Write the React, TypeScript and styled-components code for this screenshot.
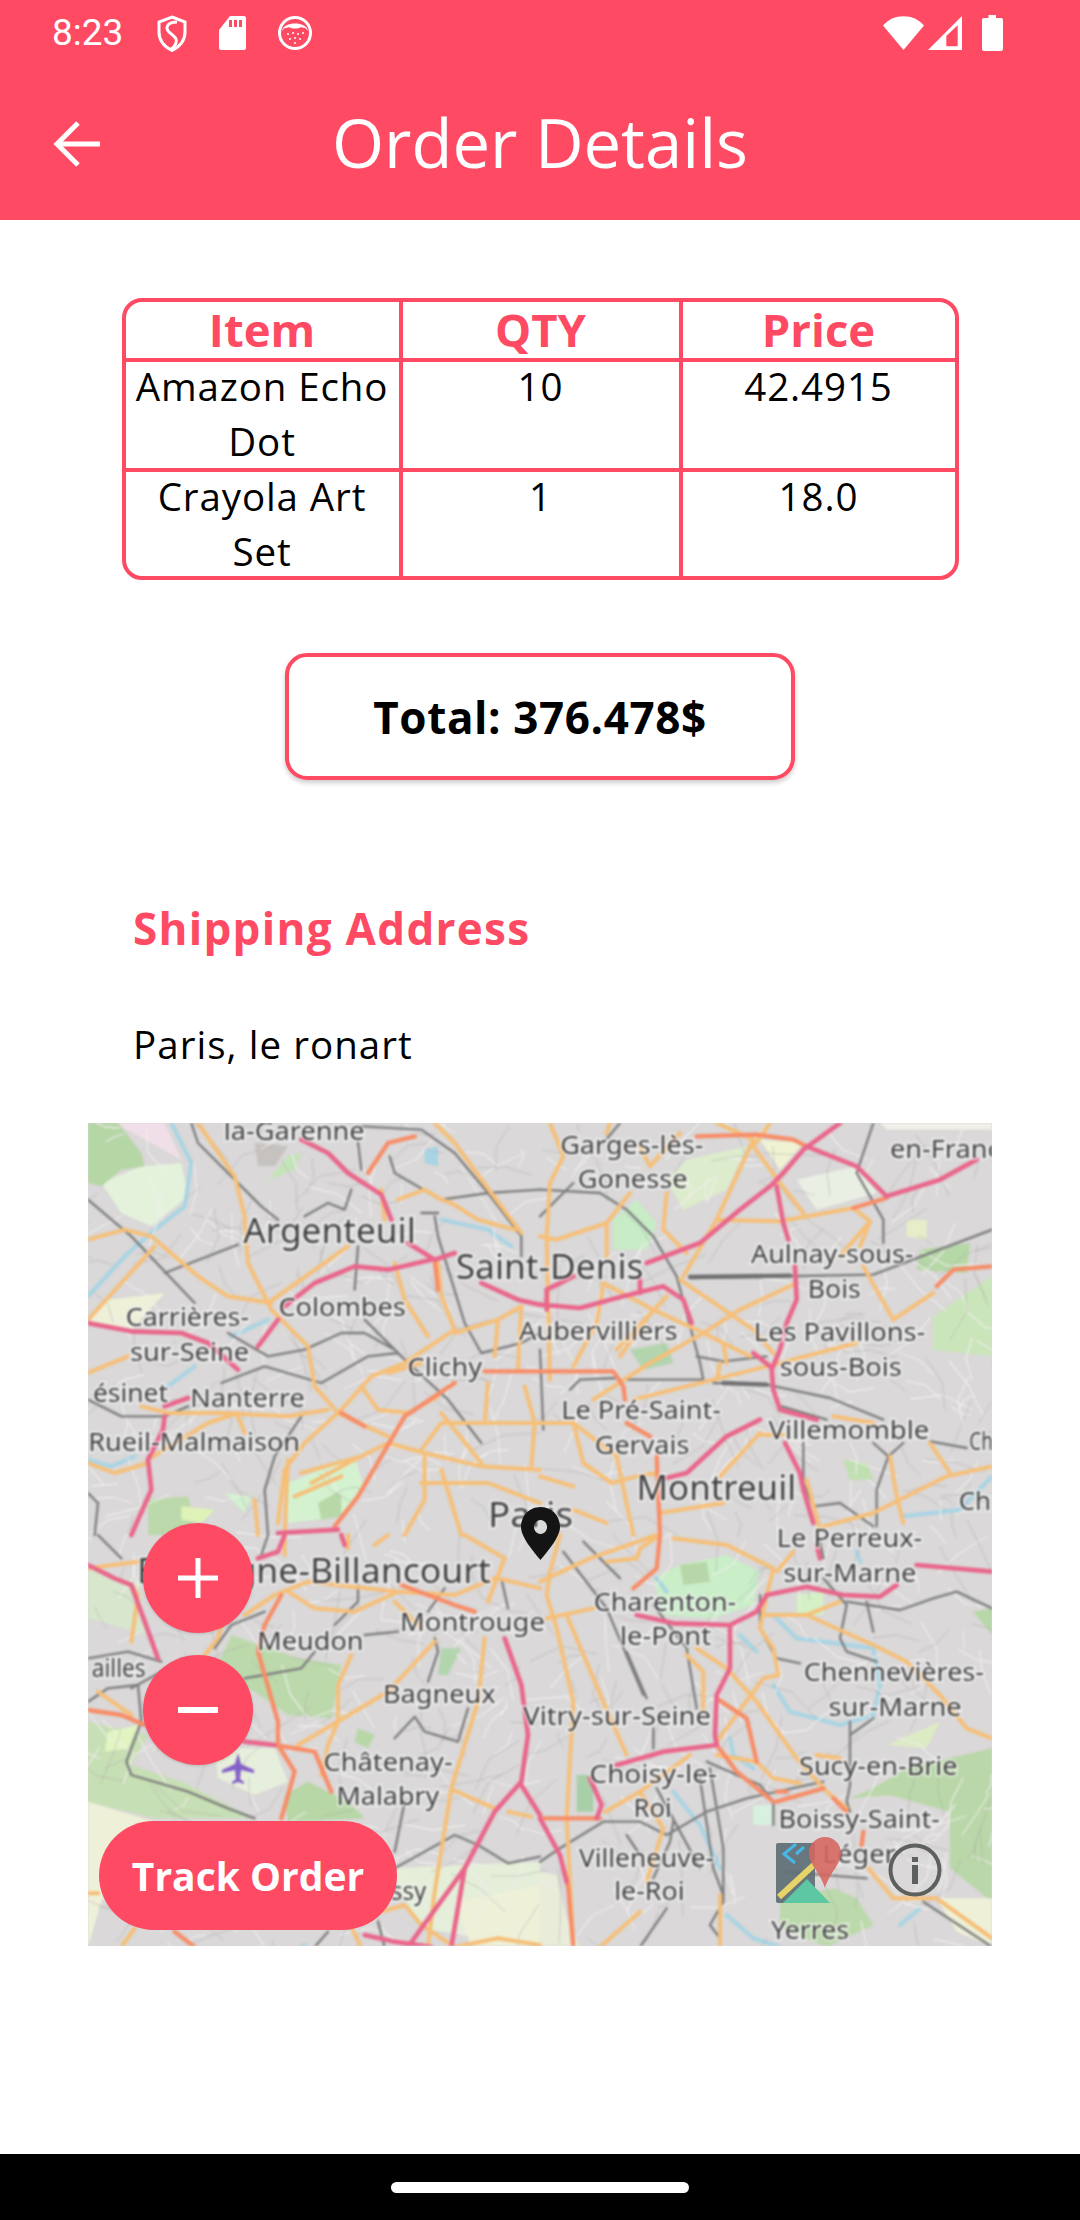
import React from 'react';
import styled, { createGlobalStyle } from 'styled-components';

const RED = '#fe4a63';

const Global = createGlobalStyle`
  html, body { margin: 0; padding: 0; background: #fff; }
  body { font-family: "Open Sans", "Noto Sans", sans-serif; }
  * { box-sizing: border-box; }
`;

const Page = styled.div`
  width: 1080px;
  height: 2220px;
  display: flex;
  flex-direction: column;
  background: #fff;
  overflow: hidden;
`;
const Header = styled.header`
  height: 220px;
  background: ${RED};
  color: #fff;
  display: flex;
  flex-direction: column;
  flex: none;
`;
const StatusBar = styled.div`
  height: 66px;
  display: flex;
  align-items: center;
  padding: 0 77px 0 52px;
`;
const Clock = styled.span`
  font-family: Roboto, sans-serif;
  font-size: 37px;
  width: 105px;
  line-height: 66px;
`;
const StatusIcons = styled.div`
  display: flex;
  align-items: center;
  gap: 32px;
`;
const Spacer = styled.div`
  flex: 1;
`;
const RightIcons = styled.div`
  display: flex;
  align-items: center;
  gap: 4px;
`;
const BatteryIcon = styled.svg`
  margin-left: 16px;
`;
const AppBar = styled.div`
  flex: 1;
  position: relative;
  display: flex;
  align-items: center;
  justify-content: center;
`;
const BackButton = styled.div`
  position: absolute;
  left: 53px;
  top: 54px;
  width: 48px;
  height: 48px;
`;
const Title = styled.h1`
  margin: 0;
  font-size: 67px;
  font-weight: 400;
  line-height: 86px;
  position: relative;
  top: -1px;
`;
const Content = styled.main`
  flex: 1;
  display: flex;
  flex-direction: column;
  align-items: center;
  padding-top: 78px;
`;
const OrderTable = styled.div`
  width: 837px;
  border: 4px solid ${RED};
  border-radius: 20px;
  display: grid;
  grid-template-columns: 277px 280px 272px;
  overflow: hidden;
`;
const HeadCell = styled.div<{ $last?: boolean }>`
  height: 60px;
  line-height: 55px;
  font-size: 45.5px;
  font-weight: 700;
  color: ${RED};
  text-align: center;
  border-right: ${(p) => (p.$last ? 'none' : `4px solid ${RED}`)};
  border-bottom: 4px solid ${RED};
`;
const Cell = styled.div<{ $last?: boolean; $bottom?: boolean }>`
  height: ${(p) => (p.$bottom ? '104px' : '110px')};
  font-size: 38.5px;
  letter-spacing: 0.9px;
  line-height: 55px;
  color: #000;
  text-align: center;
  border-right: ${(p) => (p.$last ? 'none' : `4px solid ${RED}`)};
  border-bottom: ${(p) => (p.$bottom ? 'none' : `4px solid ${RED}`)};
`;
const CellText = styled.div`
  margin-top: -3px;
`;
const TotalBox = styled.div`
  margin-top: 73px;
  width: 510px;
  height: 127px;
  border: 4px solid ${RED};
  border-radius: 22px;
  box-shadow: 0 3px 5px rgba(0, 0, 0, 0.2);
  display: flex;
  align-items: center;
  justify-content: center;
  font-size: 44px;
  letter-spacing: 0.6px;
  font-weight: 700;
  color: #000;
`;
const AddressBlock = styled.section`
  align-self: stretch;
  padding: 0 0 0 133px;
`;
const AddressTitle = styled.h2`
  margin: 118px 0 0;
  font-size: 44px;
  letter-spacing: 1.3px;
  line-height: 60px;
  font-weight: 700;
  color: ${RED};
`;
const AddressText = styled.p`
  margin: 56px 0 0;
  font-size: 38.5px;
  letter-spacing: 1.05px;
  line-height: 60px;
  color: #000;
`;
const MapBox = styled.div`
  position: relative;
  margin-top: 49px;
  width: 904px;
  height: 823px;
  overflow: hidden;
  background: #dad8d8;
`;
const MapArt = styled.svg`
  display: block;
  width: 100%;
  height: 100%;
  filter: blur(0.8px);
`;
const Fab = styled.div<{ $top: number }>`
  position: absolute;
  left: 55px;
  top: ${(p) => p.$top}px;
  width: 110px;
  height: 110px;
  border-radius: 50%;
  background: ${RED};
  display: flex;
  align-items: center;
  justify-content: center;
  box-shadow: 0 1px 3px rgba(0, 0, 0, 0.15);
`;
const TrackButton = styled.div`
  position: absolute;
  left: 11px;
  top: 698px;
  width: 298px;
  height: 109px;
  border-radius: 55px;
  background: ${RED};
  color: #fff;
  display: flex;
  align-items: center;
  justify-content: center;
  font-size: 39px;
  font-weight: 700;
`;
const Pin = styled.svg`
  position: absolute;
  left: 433px;
  top: 384px;
`;
const MapLogo = styled.svg`
  position: absolute;
  left: 688px;
  top: 714px;
`;
const InfoMark = styled.svg`
  position: absolute;
  left: 800px;
  top: 720px;
`;
const NavBar = styled.footer`
  height: 66px;
  background: #000;
  display: flex;
  align-items: center;
  justify-content: center;
  flex: none;
`;
const HomePill = styled.div`
  width: 298px;
  height: 11px;
  border-radius: 6px;
  background: #fff;
`;

type L = [string, number, number, number, number?];
const labels: L[] = [
  ['la-Garenne', 245, 485, 55],
  ['Garges-lès-', 818, 1062, 80],
  ['Gonesse', 848, 1035, 142],
  ['en-Franc', 1380, 1568, 88],
  ['Argenteuil', 278, 572, 237, 1],
  ['Saint-Denis', 640, 960, 303, 1],
  ['Aulnay-sous-', 1143, 1420, 280],
  ['Bois', 1240, 1330, 343],
  ['Colombes', 338, 555, 376],
  ['Carrières-', 78, 288, 395],
  ['sur-Seine', 85, 288, 458],
  ['Aubervilliers', 748, 1018, 420],
  ['Les Pavillons-', 1148, 1440, 422],
  ['sous-Bois', 1192, 1400, 486],
  ['Clichy', 558, 685, 487],
  ['Le Pré-Saint-', 820, 1092, 564],
  ['Gervais', 877, 1038, 628],
  ['Villemomble', 1173, 1447, 602],
  ['ésinet', 22, 150, 533],
  ['Nanterre', 188, 383, 543],
  ['Rueil-Malmaison', 14, 375, 623],
  ['Ch', 1515, 1555, 622],
  ['Ch', 1497, 1552, 732],
  ['Montreuil', 948, 1220, 708, 1],
  ['Paris', 695, 840, 757, 1],
  ['Le Perreux-', 1187, 1435, 798],
  ['sur-Marne', 1198, 1425, 862],
  ['Boulogne-Billancourt', 97, 700, 860, 1],
  ['Charenton-', 875, 1118, 915],
  ['le-Pont', 920, 1075, 978],
  ['Montrouge', 545, 792, 952],
  ['Meudon', 302, 483, 987],
  ['ailles', 20, 112, 1036],
  ['Chennevières-', 1233, 1540, 1044],
  ['sur-Marne', 1275, 1502, 1107],
  ['Bagneux', 516, 708, 1084],
  ['Vitry-sur-Seine', 755, 1075, 1125],
  ['Châtenay-', 415, 635, 1208],
  ['Malabry', 437, 612, 1271],
  ['Sucy-en-Brie', 1225, 1495, 1216],
  ['Choisy-le-', 868, 1085, 1230],
  ['Roi', 943, 1008, 1293],
  ['Boissy-Saint-', 1190, 1465, 1313],
  ['Léger', 1265, 1390, 1377],
  ['Villeneuve-', 850, 1080, 1383],
  ['le-Roi', 910, 1030, 1445],
  ['Yerres', 1177, 1310, 1515],
  ['Massy', 470, 590, 1445],
];

type Fill = [string, string];
type Quad = {
  x: number;
  y: number;
  fills: Fill[];
  water: string;
  grey: string;
  orange: string;
  salmon: string;
  pink: string;
  heavy?: string;
};

const quads: Quad[] = [
  {
    x: 0,
    y: 0,
    fills: [
      ['M80 0 L230 0 L280 110 L190 60 Z', '#f0dfe8'],
      ['M40 180 L160 130 L280 120 L300 220 L190 310 L100 270 Z', '#e4f2dc'],
      ['M0 0 L90 0 L160 90 L170 130 L100 140 L40 190 L0 180 Z', '#b5d6a5'],
      ['M60 530 L230 510 L130 620 L0 600 Z', '#eef0d8'],
      ['M500 60 L600 70 L560 130 L510 130 Z', '#c6c2bf'],
      ['M600 100 L640 90 L620 140 L540 170 Z', '#c3e4b8'],
      ['M600 1080 L800 1000 L830 1100 L760 1180 L600 1200 Z', '#d4f2d0'],
      ['M690 1140 L760 1100 L760 1180 L700 1190 Z', '#b8d8a8'],
      ['M180 1130 L300 1120 L330 1236 L180 1236 Z', '#bcd9ab'],
      ['M280 1150 L380 1160 L340 1200 L280 1190 Z', '#dff2b8'],
      ['M1010 80 L1050 70 L1050 130 L1010 120 Z', '#a8d4e4'],
      ['M410 1110 L490 1120 L470 1170 Z', '#d2f0d0'],
    ],
    water:
      'M250 0 L310 120 L290 250 L200 320 L110 400 L0 520 M1060 290 L1200 320 L1270 370 M540 590 L430 640 M320 730 L240 790 M0 1010 L70 1030 L140 1000',
    grey:
      'M0 230 L130 340 L320 540 M230 450 L450 365 M310 0 L330 60 L520 250 L570 290 M650 280 L720 240 L770 260 L790 200 M820 10 L1000 20 L1100 90 L1200 210 L1300 340 L1300 400 M905 100 L920 150 L1040 220 L1060 230 L1200 210 L1356 200 M1040 280 L1050 340 L1130 600 L1180 690 L1300 660 L1356 630 M420 630 L540 700 L650 680 L760 630 L830 630 L920 680 M400 780 L530 730 L700 780 L840 700 L930 690 M830 590 L950 710 L1080 830 L1180 960 M810 370 L800 500 M0 830 L100 880 L230 880 L300 850 M640 880 L560 1000 L530 1100 L540 1236 M1000 270 L1050 270 M810 60 L820 140 M0 1110 L30 1140 L20 1236',
    orange:
      'M330 0 L440 160 L470 280 L480 420 L550 560 L660 670 L680 790 L750 870 L900 940 M0 350 L110 320 L190 340 L330 460 L420 520 L550 540 M0 590 L100 480 L200 370 M0 750 L120 700 M540 540 L780 370 M1040 0 L1100 60 L1210 210 L1300 330 M930 230 L1010 200 L1060 230 L1090 240 L1170 290 L1280 320 M880 200 L890 290 M920 420 L950 530 L1020 640 M1050 420 L1060 520 L1100 620 M1100 620 L950 720 L850 760 L760 860 L650 960 L590 1040 L570 1200 M1100 630 L1230 590 L1300 550 M1300 550 L1290 740 M160 850 L240 870 L400 870 L600 880 L720 860 M180 1010 L360 900 L450 870 M0 1020 L80 1050 L180 1020 M450 880 L470 930 M820 790 L870 860 L960 870 L1050 820 M670 1080 L780 1020 L900 960 L1010 990 L1180 1030 L1356 1040 M1000 980 L1060 900 L1200 900 L1356 900 M1060 870 L1180 1020 M1200 780 L1190 900 M1310 790 L1340 900 L1330 1030 M1010 990 L1010 1130 L950 1236 M1000 1080 L1200 1080 L1356 1140 M1060 1040 L1120 1236 M1230 590 L1220 700 M640 1050 L820 1000 M620 1120 L760 1060 M500 1130 L510 1236 M600 1010 L590 1236 M900 750 L1000 720',
    salmon:
      'M1190 745 L1356 745 M950 880 L1100 780 M950 880 L880 1000 L810 1120 L740 1210 M840 150 L900 60 L980 40 M1040 410 L1050 500 M760 870 L830 910',
    pink:
      'M640 50 L720 90 L780 150 L880 215 L910 290 M960 360 L1040 410 L1100 390 M590 550 L680 480 L800 430 L900 440 L1030 410 M510 670 L570 590 M1180 480 L1290 530 L1356 545 M0 600 L130 625 L280 630 L360 660 L450 740 M230 850 L300 825 M230 880 L225 920 L180 1010 L190 1100 L130 1236 M570 1230 L750 1220',
  },
  {
    x: 452,
    y: 0,
    fills: [
      ['M440 110 L620 70 L560 200 L430 260 L380 170 Z', '#ddeccc'],
      ['M660 50 L790 60 L720 140 Z', '#f0f2d2'],
      ['M220 290 L290 230 L350 300 L320 380 L220 380 Z', '#c7ecc6'],
      ['M770 170 L950 130 L1010 210 L830 260 Z', '#e9efe2'],
      ['M1140 380 L1290 360 L1280 450 L1130 440 Z', '#b6d7a6'],
      ['M1180 580 L1356 460 L1356 700 L1180 680 Z', '#cbe5bb'],
      ['M270 680 L380 660 L400 720 L310 740 Z', '#b2d5ae'],
      ['M910 1010 L980 1020 L1000 1070 L930 1070 Z', '#bfe0b0'],
      ['M1100 290 L1160 290 L1160 350 L1100 340 Z', '#e6edc8'],
      ['M1020 0 L1356 0 L1356 20 L1040 20 Z', '#f0efe8'],
    ],
    water: 'M1090 1180 L1260 1160 L1356 1060',
    grey:
      'M0 200 L180 210 L260 260 L340 340 L410 460 L480 720 L490 770 M250 770 L490 770 M90 800 L120 770 L230 765 M450 465 L1000 455 L1356 320 M470 700 L550 715 L680 700 M520 780 L680 785 L870 825 L1030 890 M950 150 L1030 290 L1030 360 M0 280 L100 180 M725 850 L860 890 M790 960 L790 1080 L820 1150 L900 1140 L1000 1210 M1000 960 L1045 1000 L1010 1100 L1010 1210 M1090 960 L1045 1000 M1170 955 L1280 975 M240 0 L190 60 M1000 0 L950 150 M0 680 L10 920',
    orange:
      'M30 0 L70 100 L30 180 L20 340 L30 770 M420 30 L330 130 L300 70 M380 210 L370 320 L440 390 M0 340 L50 350 L200 300 L200 400 M200 300 L270 210 M640 50 L530 290 L430 460 M690 0 L640 70 L720 180 L790 270 M530 290 L720 295 L940 255 M940 255 L990 295 L900 400 M990 295 L960 370 M420 470 L640 620 L700 690 M190 480 L340 560 L490 630 L630 700 M770 480 L600 560 L490 630 L330 720 L160 830 M340 560 L240 700 M380 520 L230 680 M190 480 L170 600 L100 730 M280 830 L680 730 L950 660 M540 720 L530 770 M550 660 L560 720 M970 430 L1060 590 L1180 510 M660 930 L540 1060 M660 935 L730 935 M880 880 L1000 900 M0 900 L100 900 L230 1000 L280 1236 M100 900 L130 1020 L215 1080 M215 1080 L290 1060 L350 1050 L360 1190 M360 1170 L550 1140 M850 1210 L1000 1170 L1220 1060 L1356 1030 M1050 1000 L1070 1120 L1090 1200 M1170 960 L1230 1050 M800 1070 L840 1220 M100 1160 L200 1200 M530 0 L640 50 M210 0 L200 30 M0 1060 L100 1090',
    salmon:
      'M470 40 L650 35 L760 50 L800 70 M940 255 L1040 225 M1190 490 L1240 440 L1356 430 M0 745 L220 745 L250 790 L255 830 M260 900 L330 940 M350 1000 L360 1236',
    pink:
      'M900 0 L790 80 L730 150 L690 190 L600 260 L480 360 L320 420 M800 70 L950 130 L1040 220 L1200 170 L1310 110 M710 190 L730 300 L745 350 M765 430 L770 530 L740 600 L720 680 L695 740 L700 800 L720 860 L830 890 M0 545 L120 555 L250 520 L370 490 L430 530 L455 600 M20 560 L20 500 L100 460 M300 470 L300 510 M640 690 L690 730 M660 890 L560 940 L440 1050 L380 1065 M735 960 L780 1050 L790 1100 L820 1200',
    heavy: 'M450 462 L750 458 M550 780 L680 785',
  },
  {
    x: 0,
    y: 412,
    fills: [
      ['M0 800 L200 860 L40 1100 L0 1236 Z', '#eef0d8'],
      ['M430 300 L630 370 L760 390 L730 550 L600 540 L500 470 L380 410 Z', '#bcd9ab'],
      ['M0 560 L180 600 L130 690 L280 740 L400 800 L500 850 L200 850 L0 800 Z', '#c7dfb4'],
      ['M590 780 L660 740 L780 800 L830 850 L600 860 Z', '#b7d7a6'],
      ['M380 640 L560 640 L600 740 L500 780 L390 730 Z', '#e6eedc'],
      ['M1060 340 L1120 340 L1080 420 L1050 420 Z', '#b2d5ae'],
      ['M900 1000 L1356 980 L1356 1236 L1000 1180 Z', '#e4eed8'],
      ['M0 100 L150 140 L180 300 L0 250 Z', '#d7e6cd'],
      ['M1100 1100 L1356 1050 L1356 1236 L1150 1236 Z', '#eef0d8'],
      ['M60 590 L150 570 L120 640 L50 650 Z', '#e2f5c0'],
      ['M810 580 L860 600 L840 640 L800 620 Z', '#b7d7a6'],
    ],
    water: 'M640 1236 L650 1230',
    grey:
      'M0 500 L60 460 L150 450 L160 560 L115 680 L130 720 L300 770 L420 820 L500 850 M130 460 L240 400 M0 370 L120 350 L220 380 M380 340 L430 270 L530 230 M470 430 L640 400 L680 350 M830 300 L930 290 M1040 310 L1050 350 L1020 440 M920 610 L980 545 L1010 590 L1110 620 L1140 520 M920 1000 L1100 900 L1170 930 L1260 985 L1356 965 M30 0 L100 70 M1020 230 L1070 160 M740 270 L810 200 L810 150 M870 1160 L890 1236 M920 950 L950 800 M1240 130 L1260 220 M540 0 L520 60 M680 1236 L720 1190',
    orange:
      'M0 100 L150 80 M130 150 L150 180 L130 320 M470 240 L560 180 L660 140 L930 170 L1100 180 L1220 130 M600 170 L680 220 L800 230 L930 170 M920 200 L1000 280 M1190 310 L1170 500 L1090 760 L1040 1070 L1020 1236 M790 360 L750 450 L750 560 L720 630 M630 630 L900 470 L1040 320 M1095 765 L1220 820 M1260 830 L1330 845 M30 470 L130 540 M350 360 L390 310 L400 270 M0 1075 L30 1075 M880 1130 L950 1110 L1000 1170 L1100 1236 M1100 1236 L1230 1210 L1356 1230 M100 1236 L140 1180 M1130 0 L1250 70 L1200 200 M860 30 L900 0 M1230 130 L1356 160 M590 0 L590 60 M780 0 L780 40 M700 1000 L820 1236 M720 630 L700 720',
    salmon:
      'M580 180 L530 270 L510 350 L570 560 L570 630 L620 710 L580 850 M0 525 L100 540 L170 570 M560 630 L680 650 L730 770 M940 150 L1100 210 L1160 230 M260 1190 L320 1236',
    pink:
      'M0 90 L80 130 L130 150 L170 260 L210 370 M590 0 L570 50 L510 70 M470 620 L560 630 M1250 310 L1300 450 L1320 600 L1300 740 L1220 830 L1130 1000 L1000 1180 L960 1236 M1300 750 L1356 840 M1130 1000 L1090 1236 M830 1200 L920 1220 L1030 1236 M760 0 L770 30',
  },
  {
    x: 452,
    y: 412,
    fills: [
      ['M340 130 L420 90 L560 60 L660 110 L640 210 L520 250 L370 240 Z', '#c9eec8'],
      ['M420 90 L500 80 L510 140 L430 150 Z', '#b7d7a8'],
      ['M770 180 L850 170 L850 240 L770 240 Z', '#d4f0c4'],
      ['M1300 230 L1356 220 L1356 300 Z', '#b7d7a8'],
      ['M930 790 L1000 760 L1100 700 L1356 640 L1356 1100 L1230 1000 L1230 830 L1050 780 Z', '#b9d7a8'],
      ['M720 1090 L880 1060 L950 1090 L1000 1170 L860 1236 L720 1180 Z', '#bcd9ab'],
      ['M1040 630 L1200 560 L1160 640 Z', '#dcebc4'],
      ['M110 720 L160 720 L160 830 L110 830 Z', '#a8cfa8'],
      ['M0 1010 L50 1020 L80 1150 L120 1236 L0 1236 Z', '#e8ecd8'],
      ['M640 810 L700 810 L700 870 L640 870 Z', '#d8f0e0'],
      ['M1190 1090 L1356 1090 L1356 1236 L1250 1190 Z', '#eef0d8'],
    ],
    water:
      'M700 240 L770 310 L1000 340 L1020 450 L1000 540 L900 570 L750 530 L700 450 M570 610 L580 660 L640 700 M600 300 L650 350 M560 1140 L640 1210 L720 1236 M1080 1170 L1140 1120 M950 50 L960 80 M350 130 L380 170 M400 770 L480 870 L540 1000',
    grey:
      'M130 20 L240 130 M70 50 L200 220 L310 480 M340 210 L440 340 L470 520 M260 350 L320 490 M500 680 L660 750 L700 800 L700 870 M340 640 L340 580 M350 760 L480 1000 M660 180 L660 280 L710 370 L780 385 M850 130 L920 210 L900 310 L920 350 L1010 380 M920 200 L1080 225 L1180 190 L1250 170 L1356 220 M980 200 L1000 290 M930 560 L930 750 L920 800 L930 830 M930 600 L1000 550 M480 730 L520 1000 L550 1080 M510 700 L550 940 L550 1100 L510 1170 L540 1210 M850 740 L620 790 L500 830 L380 900 L300 860 L190 860 L60 940 L0 980 M260 900 L300 960 M400 860 L390 920 L340 1030 M1150 1100 L1356 1236 M380 1120 L300 1236 M730 1010 L980 1030 M840 20 L850 70',
    orange:
      'M60 0 L30 110 L20 180 L50 280 L100 500 L80 850 L100 1236 M0 140 L150 70 L350 0 M360 0 L300 40 L290 70 L200 80 M400 10 L560 30 L700 100 L680 180 L660 280 L700 340 L715 420 L670 430 L530 620 M760 50 L710 110 M80 240 L190 500 L260 660 M20 250 L160 220 M470 340 L560 400 L650 500 L770 670 L860 770 L920 820 M440 360 L490 410 L490 530 M680 240 L800 240 L900 200 M800 240 L1000 330 L1100 380 L1200 480 L1280 580 L1356 610 M530 660 L650 680 L700 730 L780 745 M195 830 L300 770 L370 880 L320 1040 M450 660 L300 770 M540 1080 L540 1236 M985 1000 L1060 1090 L1190 1090 L1356 1210 M180 1236 L300 1130 M830 660 L900 670',
    salmon:
      'M0 850 L180 850 M710 770 L740 770 M710 800 L850 760 M880 790 L920 830 M530 630 L590 710 L700 800 M530 490 L620 550 L650 680 M970 890 L965 930 M70 1000 L85 1060 L100 1236 M280 160 L350 100 L360 0',
    pink:
      'M290 240 L400 265 L570 270 L650 230 L680 180 L800 155 L910 180 L1020 185 L1070 150 M570 270 L570 400 L530 480 L525 600 L530 630 M530 630 L370 650 L230 690 M150 730 L185 810 L170 850 M0 850 L60 960 L80 1040 M1130 90 L1356 110 M830 30 L840 70',
  },
];

const seeded = (n: number, seed: number, minLen: number, span: number) => {
  let s = seed;
  const out: string[] = [];
  const r = () => {
    s = (s * 16807) % 2147483647;
    return s / 2147483647;
  };
  for (let i = 0; i < n; i++) {
    const x = r() * 904;
    const y = r() * 823;
    const a = r() * Math.PI * 2;
    const l = minLen + r() * span;
    const a2 = a + (r() - 0.5) * 1.4;
    out.push(
      `M${x.toFixed(0)} ${y.toFixed(0)} l${(Math.cos(a) * l).toFixed(0)} ${(Math.sin(a) * l).toFixed(0)} l${(
        Math.cos(a2) * l
      ).toFixed(0)} ${(Math.sin(a2) * l).toFixed(0)}`
    );
  }
  return out.join(' ');
};
const minorLight = seeded(420, 12345, 8, 26);
const minorDark = seeded(380, 777, 8, 30);

const SX = 0.587;
const SY = 0.547;
const TX = -8;
const TY = -22;

const Stroke: React.FC<{ d?: string; c: string; w: number; o?: number }> = ({ d, c, w, o = 1 }) =>
  d ? <path d={d} fill="none" stroke={c} strokeWidth={w} strokeOpacity={o} strokeLinejoin="round" strokeLinecap="round" /> : null;

export default function App() {
  return (
    <Page>
      <Global />
      <Header>
        <StatusBar>
          <Clock>8:23</Clock>
          <StatusIcons>
            <svg width="30" height="37" viewBox="0 0 30 37" fill="none" stroke="#fff" strokeWidth="3">
              <path d="M15 2 L28 7 V17 C28 26 22 32 15 35.5 C8 32 2 26 2 17 V7 Z" />
              <path d="M20 7 C10 7 8 13 12 17 C16 21 21 23 19 28 C18 31 16 33 14 34" strokeWidth="3" />
            </svg>
            <svg width="27" height="34" viewBox="0 0 27 34" fill="#fff">
              <path d="M11 0 H25 a2 2 0 0 1 2 2 V32 a2 2 0 0 1 -2 2 H2 a2 2 0 0 1 -2 -2 V14 Z" />
              <path d="M10 4h3v7h-3zM15 4h3v7h-3zM20 4h3v7h-3z" fill={RED} />
            </svg>
            <svg width="34" height="34" viewBox="0 0 34 34" fill="none">
              <circle cx="17" cy="17" r="15.5" stroke="#fff" strokeWidth="3" />
              <path d="M4 15 C5 5 29 5 30 15 C27 10 25 13 23 11 C20 13 14 13 11 11 C9 13 7 10 4 15 Z" fill="#fff" />
              <g fill="#fff">
                <circle cx="10" cy="18" r="1" />
                <circle cx="15" cy="17" r="1" />
                <circle cx="20" cy="18" r="1" />
                <circle cx="25" cy="17" r="1" />
                <circle cx="12" cy="23" r="1" />
                <circle cx="17" cy="22" r="1" />
                <circle cx="22" cy="23" r="1" />
                <circle cx="17" cy="27" r="1" />
              </g>
            </svg>
          </StatusIcons>
          <Spacer />
          <RightIcons>
            <svg width="41" height="34" viewBox="0 0 41 34" fill="#fff">
              <path d="M0 9.5 C10 -3 31 -3 41 9.5 L20.5 34 Z" />
            </svg>
            <svg width="34" height="34" viewBox="0 0 34 34" fill="#fff">
              <path fillRule="evenodd" d="M34 0 V34 H0 Z M29.7 9.3 L18.3 20 V30.3 H29.7 Z" />
            </svg>
            <BatteryIcon width="21" height="36" viewBox="0 0 21 36" fill="#fff">
              <path d="M6.5 0 H14 V3 H19 a2 2 0 0 1 2 2 V34 a2 2 0 0 1 -2 2 H2 a2 2 0 0 1 -2 -2 V5 a2 2 0 0 1 2 -2 H6.5 Z" />
            </BatteryIcon>
          </RightIcons>
        </StatusBar>
        <AppBar>
          <BackButton>
            <svg width="48" height="48" viewBox="0 0 48 48" fill="none" stroke="#fff" strokeWidth="5">
              <path d="M47 24 H6" />
              <path d="M25 3 L4 24 L25 45" />
            </svg>
          </BackButton>
          <Title>Order Details</Title>
        </AppBar>
      </Header>
      <Content>
        <OrderTable>
          <HeadCell>Item</HeadCell>
          <HeadCell>QTY</HeadCell>
          <HeadCell $last>Price</HeadCell>
          <Cell><CellText>Amazon Echo Dot</CellText></Cell>
          <Cell><CellText>10</CellText></Cell>
          <Cell $last><CellText>42.4915</CellText></Cell>
          <Cell $bottom><CellText>Crayola Art Set</CellText></Cell>
          <Cell $bottom><CellText>1</CellText></Cell>
          <Cell $bottom $last><CellText>18.0</CellText></Cell>
        </OrderTable>
        <TotalBox>Total: 376.478$</TotalBox>
        <AddressBlock>
          <AddressTitle>Shipping Address</AddressTitle>
          <AddressText>Paris, le ronart</AddressText>
        </AddressBlock>
        <MapBox>
          <MapArt viewBox="0 0 904 823">
            {quads.map((q, i) => (
              <g key={i} transform={`translate(${q.x} ${q.y}) scale(${1 / 3})`}>
                {q.fills.map(([d, c], j) => (
                  <path key={j} d={d} fill={c} />
                ))}
                <Stroke d={q.water} c="#a8d4e4" w={12} />
              </g>
            ))}
            <Stroke d={minorLight} c="#f1efef" w={1.3} o={0.85} />
            <Stroke d={minorDark} c="#a6a4a4" w={0.9} o={0.5} />
            {quads.map((q, i) => (
              <g key={i} transform={`translate(${q.x} ${q.y}) scale(${1 / 3})`}>
                <Stroke d={q.grey} c="#7d7d7d" w={7} />
                <Stroke d={q.heavy} c="#707070" w={13} />
                <Stroke d={q.orange} c="#f6bf78" w={12} />
                <Stroke d={q.salmon} c="#f78d68" w={13} />
                <Stroke d={q.pink} c="#e9668b" w={14} />
              </g>
            ))}
            <path
              d="M150 630 l3 11 l13 6 v3 l-13 -3 l-1 9 l4 3 v2 l-6 -2 l-6 2 v-2 l4 -3 l-1 -9 l-13 3 v-3 l13 -6 Z"
              fill="#8461c8"
            />
            {labels.map(([t, a, b, y, big], i) => (
              <text
                key={i}
                x={a * SX + TX}
                y={y * SY + TY + (big ? 12 : 9)}
                textLength={(b - a) * SX}
                lengthAdjust="spacingAndGlyphs"
                fontFamily="'Noto Sans', sans-serif"
                fontSize={big ? 34 : 26}
                fill="#3e3e3e"
                stroke="#ffffff"
                strokeOpacity="0.6"
                strokeWidth="3.5"
                paintOrder="stroke"
              >
                {t}
              </text>
            ))}
          </MapArt>
          <Pin width="39" height="53" viewBox="0 0 39 53">
            <path
              fillRule="evenodd"
              d="M19.5 0 C31 0 39 9 39 20 C39 30 27 44 19.5 53 C12 44 0 30 0 20 C0 9 8 0 19.5 0 Z M19.5 13 a6.5 7 0 1 0 0.01 0 Z"
              fill="#141414"
            />
          </Pin>
          <Fab $top={400}>
            <svg width="40" height="40" viewBox="0 0 40 40" fill="#fff">
              <path d="M17.5 0h5v17.5H40v5H22.5V40h-5V22.5H0v-5h17.5z" />
            </svg>
          </Fab>
          <Fab $top={532}>
            <svg width="40" height="7" viewBox="0 0 40 7" fill="#fff">
              <rect width="40" height="6" />
            </svg>
          </Fab>
          <TrackButton>Track Order</TrackButton>
          <MapLogo width="66" height="67" viewBox="0 0 66 67">
            <path d="M2 6 H39 V66 H2 a2 2 0 0 1 -2 -2 V8 a2 2 0 0 1 2 -2 Z" fill="#5e6e76" fillOpacity="0.92" />
            <path d="M41 25 L3 60" stroke="#e6d468" strokeWidth="6" fill="none" />
            <path d="M7 66 L31 42 L54 66 Z" fill="#5cc7a2" />
            <path d="M20 7 L8 17 L19 26 M28 10 L20 17" fill="none" stroke="#45b8e8" strokeWidth="3" />
            <path
              d="M49 0 C58 0 65 7 65 16 C65 27 54 35 49 51 C44 35 33 27 33 16 C33 7 40 0 49 0 Z"
              fill="#d6655f"
              fillOpacity="0.88"
            />
          </MapLogo>
          <InfoMark width="54" height="54" viewBox="0 0 54 54" fill="none" stroke="#5d605c">
            <circle cx="27" cy="27" r="24.5" strokeWidth="4" />
            <path d="M27 22 V41" strokeWidth="6" />
            <rect x="24" y="14" width="6" height="5" fill="#5d605c" stroke="none" />
          </InfoMark>
        </MapBox>
      </Content>
      <NavBar>
        <HomePill />
      </NavBar>
    </Page>
  );
}
